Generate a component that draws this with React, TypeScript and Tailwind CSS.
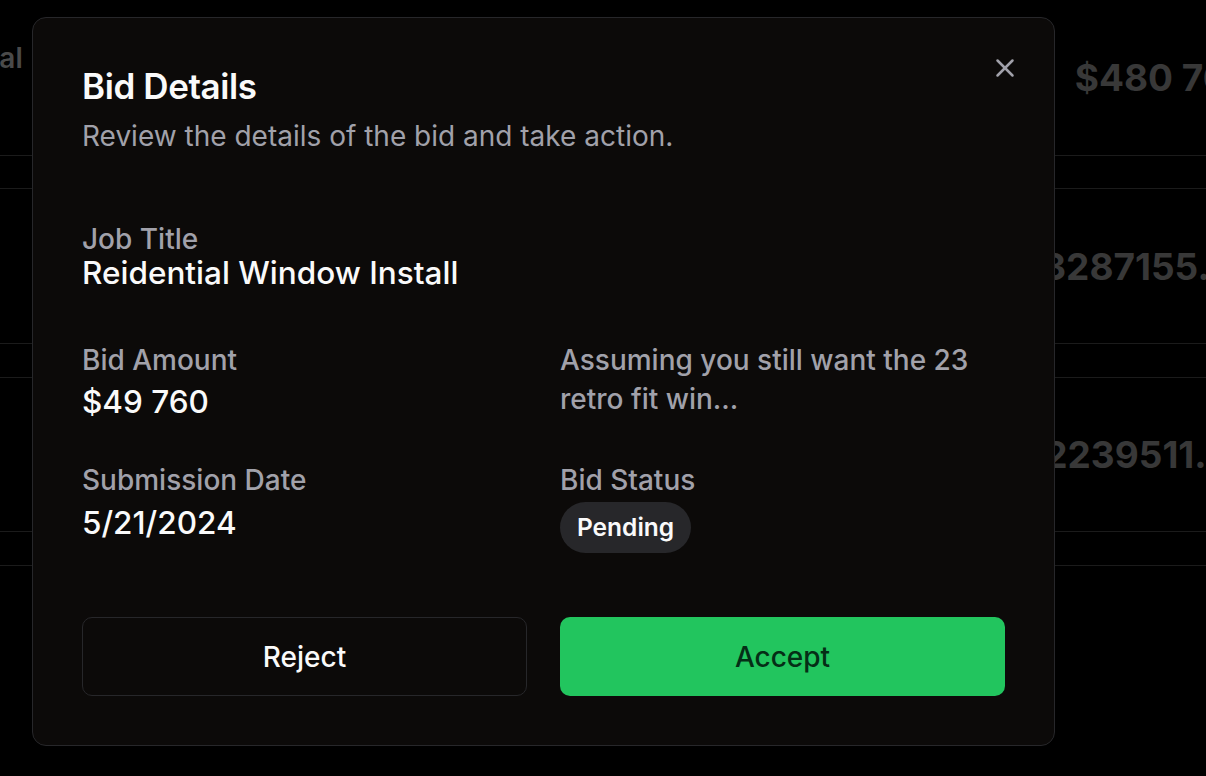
import React from "react";
import { X } from "lucide-react";

const font = { fontFamily: "Inter, 'Noto Sans', sans-serif" };

function BgNumber({ text, pl }: { text: string; pl: string }) {
  return (
    <span className={`whitespace-nowrap text-[37px] font-bold leading-none text-[#383838] ${pl}`}>{text}</span>
  );
}

export default function App() {
  return (
    <div className="relative h-[776px] w-[1206px] overflow-hidden bg-black" style={font}>
      {/* background table */}
      <div className="flex flex-col">
        <div className="flex h-[156px] border-b border-[#1b1b1b]">
          <span className="-ml-[44px] mt-[40px] whitespace-nowrap text-[28px] font-semibold leading-[36px] text-[#4a4a4a]">Total</span>
          <span className="ml-[1052px] mt-[60px] whitespace-nowrap text-[37px] font-bold leading-[36px] text-[#383838]">$480 760</span>
        </div>
        <div className="h-[33px] border-b border-[#1b1b1b]" />
        <div className="flex h-[155px] items-center border-b border-[#1b1b1b]">
          <BgNumber text="$3287155.00" pl="pl-[1018px]" />
        </div>
        <div className="h-[34px] border-b border-[#1b1b1b]" />
        <div className="flex h-[154px] items-center border-b border-[#1b1b1b]">
          <BgNumber text="$2239511.00" pl="pl-[1020px]" />
        </div>
        <div className="h-[34px] border-b border-[#1b1b1b]" />
      </div>

      {/* dialog */}
      <div className="absolute left-[32px] top-[17px] flex h-[729px] w-[1023px] flex-col rounded-[14px] border border-[#27272a] bg-[#0c0a09] px-[49px] pt-[48px] pb-[49px]">
        <button className="absolute right-[34px] top-[35px] text-[#a1a1aa]">
          <X size={30} strokeWidth={2} />
        </button>
        <h2 className="text-[35px] font-semibold leading-[40px] tracking-[-0.4px] text-[#fafafa]">Bid Details</h2>
        <p className="mt-[14px] text-[28px] leading-[32px] text-[#a1a1aa]">Review the details of the bid and take action.</p>

        <div className="mt-[70px] flex flex-col">
          <span className="text-[28px] font-medium leading-[35px] text-[#a1a1aa]">Job Title</span>
          <span className="text-[31.5px] font-medium leading-[32px] text-[#fafafa]">Reidential Window Install</span>
        </div>

        <div className="mt-[50px] grid grid-cols-2 gap-x-[33px]">
          <div className="flex flex-col">
            <span className="text-[28px] font-medium leading-[42px] text-[#a1a1aa]">Bid Amount</span>
            <span className="text-[31.5px] font-medium leading-[42px] text-[#fafafa]">$49 760</span>
          </div>
          <div className="flex flex-col pt-[2px]">
            <span className="text-[28px] font-medium leading-[39px] text-[#a1a1aa]">
              Assuming you still want the 23 retro fit win...
            </span>
          </div>
        </div>

        <div className="mt-[36px] grid grid-cols-2 gap-x-[33px]">
          <div className="flex flex-col">
            <span className="text-[28px] font-medium leading-[42px] text-[#a1a1aa]">Submission Date</span>
            <span className="mt-[1px] text-[31.5px] font-medium leading-[42px] text-[#fafafa]">5/21/2024</span>
          </div>
          <div className="flex flex-col items-start">
            <span className="text-[28px] font-medium leading-[42px] text-[#a1a1aa]">Bid Status</span>
            <span className="mt-[1px] flex h-[51px] items-center rounded-full bg-[#27272a] px-[17px] text-[24.5px] font-semibold text-[#fafafa]">
              Pending
            </span>
          </div>
        </div>

        <div className="mt-auto grid grid-cols-2 gap-x-[33px]">
          <button className="flex h-[79px] items-center justify-center rounded-[10px] border border-[#27272a] bg-[#0c0a09] text-[28px] font-medium text-[#fafafa]">
            Reject
          </button>
          <button className="flex h-[79px] items-center justify-center rounded-[10px] bg-[#22c55e] text-[28px] font-medium text-[#052e16]">
            Accept
          </button>
        </div>
      </div>
    </div>
  );
}
